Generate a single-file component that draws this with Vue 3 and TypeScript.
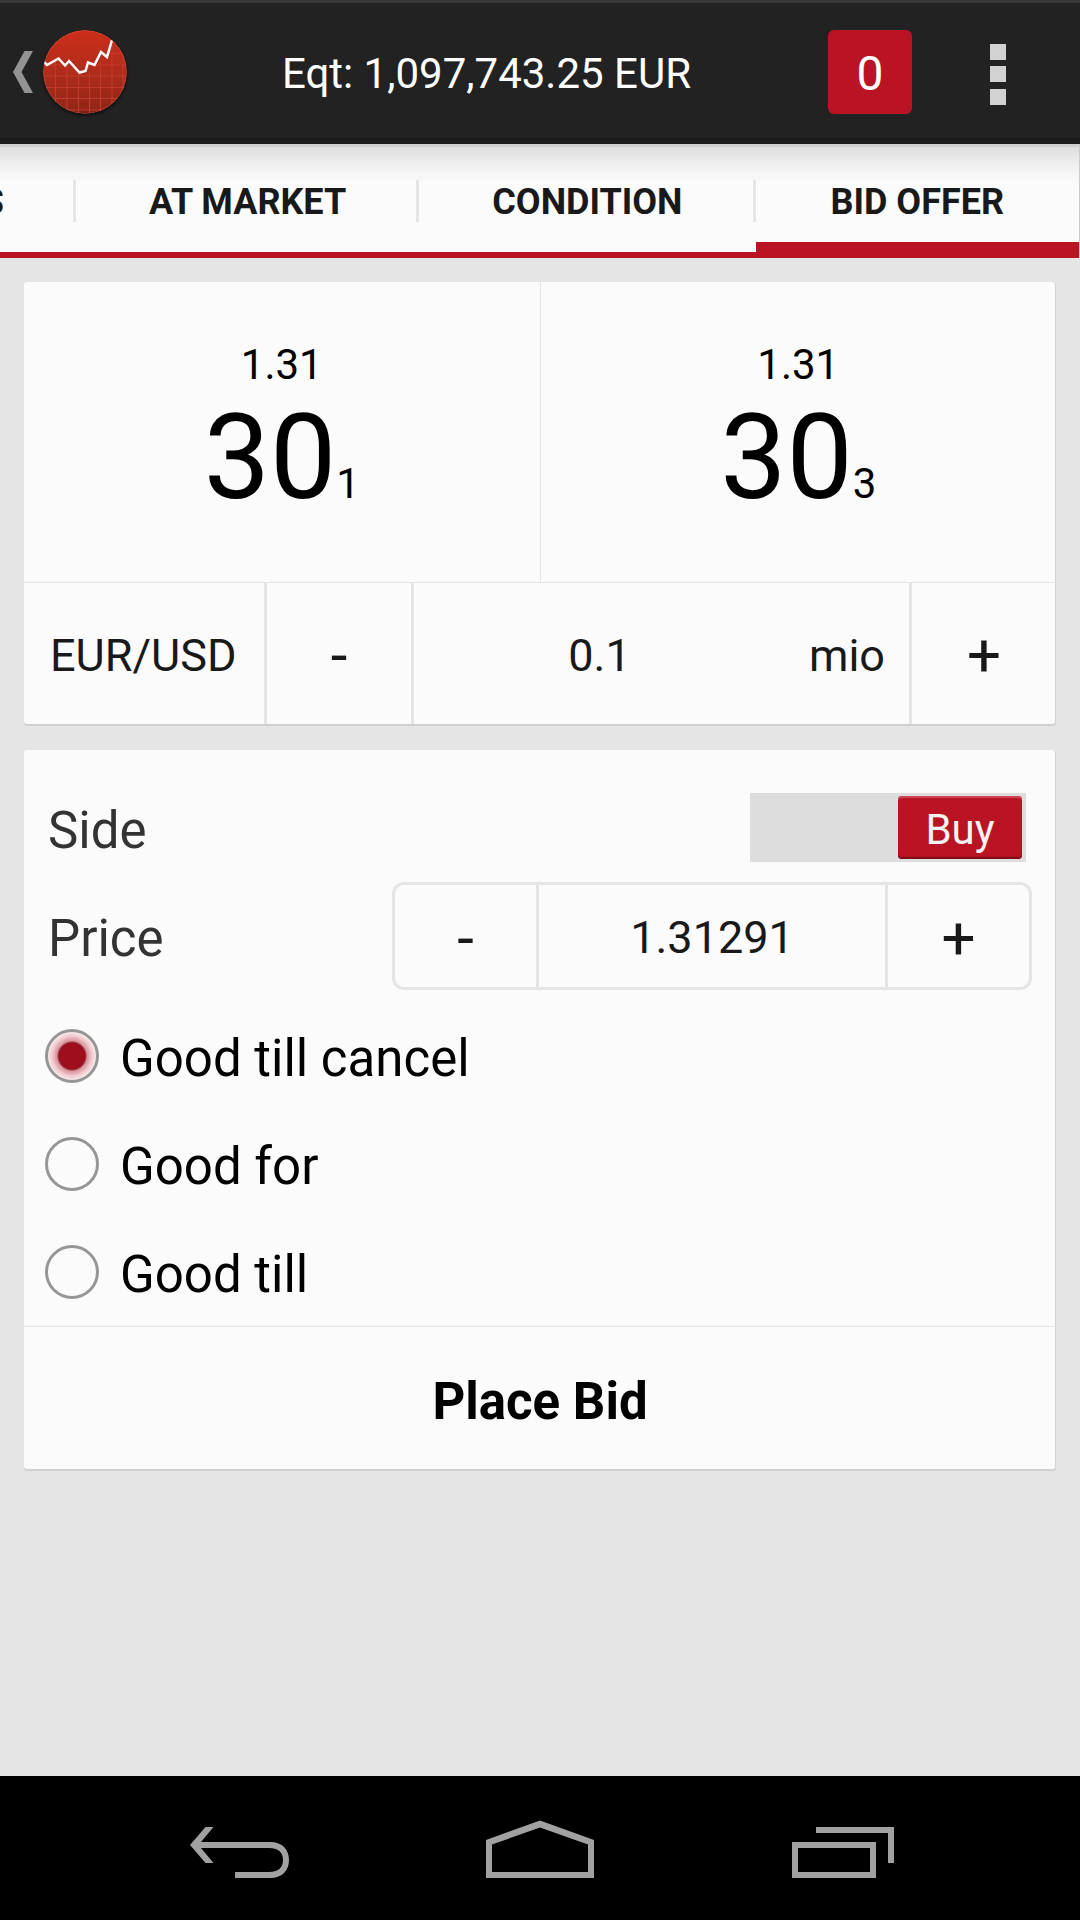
<script setup lang="ts">
import { ref } from 'vue'

interface Quote {
  name: string
  big: string
  pips: string
  point: string
}

const quotes: Quote[] = [
  { name: 'bid', big: '1.31', pips: '30', point: '1' },
  { name: 'offer', big: '1.31', pips: '30', point: '3' },
]

const tabs: string[] = ['S', 'AT MARKET', 'CONDITION', 'BID OFFER']
const activeTab = ref<string>('BID OFFER')

const amount = ref<string>('0.1')
const price = ref<string>('1.31291')
const isBuy = ref<boolean>(true)

const durations: string[] = ['Good till cancel', 'Good for', 'Good till']
const duration = ref<string>('Good till cancel')

function step(value: string, delta: number, digits: number): string {
  return Math.max(0, Number(value) + delta).toFixed(digits)
}
</script>

<template>
  <div class="screen">
    <header class="bar">
      <button class="home" aria-label="Navigate up">
        <svg class="chevron" viewBox="0 0 20 42" aria-hidden="true">
          <path d="M11.500 0H20L8.500 21 20 42H11.500L0 21Z" fill="#939393" />
        </svg>
        <svg class="logo" viewBox="0 0 84 84" aria-hidden="true">
          <defs>
            <linearGradient id="disc" x1="0" y1="0" x2="0" y2="1">
              <stop offset="0" stop-color="#cc2e19" />
              <stop offset="0.5" stop-color="#b02c1b" />
              <stop offset="0.94" stop-color="#922616" />
              <stop offset="1" stop-color="#6c1a0e" />
            </linearGradient>
            <clipPath id="round"><circle cx="42" cy="42" r="42" /></clipPath>
          </defs>
          <g clip-path="url(#round)">
            <rect width="84" height="84" fill="url(#disc)" />
            <path
              d="M12.500 30V84M24 34V84M35.500 42V84M46.500 42V84M57.500 32V84M69 12V84M80 24V84M68 23.500H84M0 35H20M50 35H84M0 46H84M0 57.500H84M0 68.500H84M0 80H84"
              fill="none"
              stroke="#c23a2e"
              stroke-width="1"
            />
            <path
              d="M0 31 4 35 15.500 28.500 22 35.500 26 31 36.500 42.500 42.500 41 45 32.500 51.500 35 58 22 64 27 69 10"
              fill="none"
              stroke="#fff"
              stroke-width="2.500"
            />
            <circle cx="42" cy="42" r="41.500" fill="none" stroke="#e06a55" stroke-opacity="0.4" />
          </g>
        </svg>
      </button>
      <h1 class="equity">Eqt: 1,097,743.25 EUR</h1>
      <button class="badge" aria-label="Open positions">0</button>
      <button class="more" aria-label="More options">
        <svg viewBox="0 0 16 61" aria-hidden="true">
          <path d="M0 0h16v16H0zM0 22h16v16H0zM0 45h16v16H0z" fill="#d2d2d2" />
        </svg>
      </button>
    </header>

    <nav class="tabs" role="tablist">
      <button
        v-for="tab in tabs"
        :key="tab"
        class="tab"
        :class="{ active: tab === activeTab }"
        role="tab"
        :aria-selected="tab === activeTab"
        @click="activeTab = tab"
      >
        {{ tab }}
      </button>
    </nav>

    <main class="content">
      <section class="card">
        <div class="quotes">
          <button v-for="q in quotes" :key="q.name" class="quote" :aria-label="q.name">
            <span class="figure">{{ q.big }}</span>
            <span class="pips">{{ q.pips }}<span class="figure">{{ q.point }}</span></span>
          </button>
        </div>
        <div class="amount">
          <label class="pair" for="amount">EUR/USD</label>
          <button class="sign" aria-label="Less" @click="amount = step(amount, -0.1, 1)">-</button>
          <div class="value">
            <input id="amount" v-model="amount" size="1" inputmode="decimal" />
            <span class="unit">mio</span>
          </div>
          <button class="sign" aria-label="More" @click="amount = step(amount, 0.1, 1)">+</button>
        </div>
      </section>

      <form class="card" @submit.prevent>
        <div class="order">
          <div class="field">
            <label class="name" for="side">Side</label>
            <span class="switch" :class="{ on: isBuy }">
              <input id="side" v-model="isBuy" type="checkbox" role="switch" />
              <span class="thumb">{{ isBuy ? 'Buy' : 'Sell' }}</span>
            </span>
          </div>
          <div class="field">
            <label class="name" for="price">Price</label>
            <div class="stepper">
              <button type="button" class="sign" aria-label="Lower" @click="price = step(price, -0.00001, 5)">-</button>
              <input id="price" v-model="price" size="1" inputmode="decimal" />
              <button type="button" class="sign" aria-label="Higher" @click="price = step(price, 0.00001, 5)">+</button>
            </div>
          </div>
          <div class="durations" role="radiogroup" aria-label="Duration">
            <label v-for="d in durations" :key="d" class="option">
              <input v-model="duration" type="radio" name="duration" :value="d" />
              <span>{{ d }}</span>
            </label>
          </div>
        </div>
        <button type="submit" class="place">Place Bid</button>
      </form>
    </main>

    <footer class="system">
      <button aria-label="Back">
        <svg viewBox="0 0 108 60" aria-hidden="true">
          <path
            d="M4 27 19.500 9H27.500L15 24H84C97 24 103 32 103 42S97 60 84 60H49V54H83C92 54 97 50 97 42S92 30 83 30H15L27.500 45H19.500Z"
            fill="#a1a1a1"
          />
        </svg>
      </button>
      <button aria-label="Home">
        <svg viewBox="0 0 108 60" aria-hidden="true">
          <path d="M0 22 54 2.500 108 22V60H0ZM6 26.500V54H102V26.500L54 9.500Z" fill="#a1a1a1" fill-rule="evenodd" />
        </svg>
      </button>
      <button aria-label="Recent apps">
        <svg viewBox="0 0 108 60" aria-hidden="true">
          <path d="M6 24H90V60H6ZM12 30V54H84V30ZM30 9H108V45H102V15H30Z" fill="#a1a1a1" fill-rule="evenodd" />
        </svg>
      </button>
    </footer>
  </div>
</template>

<style>
body {
  background: #e5e5e5;
}
</style>

<style scoped>
.screen {
  display: flex;
  flex-direction: column;
  min-height: 100vh;
  font-family: Roboto, "Liberation Sans", sans-serif;
  color: #191919;
}

.screen * {
  box-sizing: border-box;
}

button,
input {
  margin: 0;
  padding: 0;
  border: 0;
  border-radius: 0;
  background: none;
  color: inherit;
  font: inherit;
  min-width: 0;
}

svg {
  display: block;
}

.bar {
  display: flex;
  align-items: center;
  height: 144px;
  border-top: 3px solid #3a3a3a;
  border-bottom: 6px solid #1b1b1b;
  padding-top: 3px;
  background: #222;
  color: #fff;
}

.home {
  display: flex;
  align-items: center;
  gap: 10px;
  padding-left: 13px;
}

.chevron {
  width: 20px;
  height: 42px;
}

.logo {
  width: 84px;
  height: 84px;
  border-radius: 50%;
  box-shadow: 0 2px 3px #111;
}

.equity {
  flex: 1;
  margin: 0;
  padding: 4px 0 0 18px;
  font-size: 42px;
  font-weight: 400;
  line-height: 48px;
  text-align: center;
}

.badge {
  width: 84px;
  height: 84px;
  padding-top: 2px;
  border-radius: 6px;
  background: #ba1323;
  font-size: 48px;
}

.more {
  display: flex;
  justify-content: center;
  width: 168px;
  padding: 4px 0 0 4px;
}

.more svg {
  width: 16px;
  height: 61px;
}

.tabs {
  display: flex;
  justify-content: flex-end;
  height: 114px;
  overflow: hidden;
  border-right: 1px solid #ccc;
  background:
    linear-gradient(#ba1323, #ba1323) bottom / 100% 6px no-repeat,
    linear-gradient(#cfcfcf 3px, #dedede 3px, #efefef 20px, #fbfbfb 40px);
}

.tab {
  flex: none;
  padding: 2px 73px 0;
  background: linear-gradient(#e5e5e5, #e5e5e5) right 36px / 3px 42px no-repeat;
  font-size: 36px;
  font-weight: 700;
  white-space: nowrap;
}

.tab:first-child {
  padding-right: 72px;
}

.tab.active {
  padding: 18px 75px 0;
  border-bottom: 16px solid #ba1323;
  background: none;
}

.content {
  display: flex;
  flex: 1;
  flex-direction: column;
  gap: 26px;
  padding: 24px;
}

.card {
  border-radius: 3px;
  background: #fbfbfb;
  box-shadow: inset -1px 0 0 #d1d1d1, 0 2px 0 #d1d1d1;
}

.quotes {
  display: flex;
  border-bottom: 1px solid #e5e5e5;
  color: #000;
}

.quote {
  display: flex;
  flex: 1;
  flex-direction: column;
  align-items: center;
  justify-content: flex-start;
  gap: 9px;
  height: 300px;
  padding-top: 59px;
}

.quote + .quote {
  border-left: 1px solid #e5e5e5;
}

.figure {
  font-size: 42px;
  line-height: 48px;
}

.pips {
  font-size: 118px;
  line-height: 120px;
}

.amount {
  display: flex;
  height: 141px;
  font-size: 45px;
}

.pair {
  display: flex;
  align-items: center;
  width: 240px;
  padding: 4px 0 0 26px;
}

.sign {
  flex: none;
  width: 147px;
  padding-top: 4px;
  font-size: 60px;
}

.amount .sign {
  border-left: 3px solid #e5e5e5;
}

.value {
  display: flex;
  flex: 1;
  align-items: center;
  padding: 4px 24px 0 0;
  border-left: 3px solid #e5e5e5;
}

.value input,
.stepper input {
  flex: 1;
  text-align: center;
}

.unit {
  padding-left: 24px;
}

.order {
  padding: 24px 24px 0;
}

.field {
  display: flex;
  align-items: center;
  justify-content: space-between;
  height: 108px;
}

.name {
  padding-top: 4px;
  color: #333;
  font-size: 51px;
}

.switch {
  position: relative;
  display: flex;
  width: 276px;
  height: 69px;
  margin: 0 6px 2px 0;
  padding: 3px 4px;
  background: #ddd;
}

.switch input {
  position: absolute;
  inset: 0;
  width: 100%;
  height: 100%;
  opacity: 0;
}

.switch.on {
  justify-content: flex-end;
}

.thumb {
  width: 124px;
  border-radius: 4px;
  background: #ba1323;
  box-shadow: inset 0 2px 1px #d04a57, inset 0 -2px 1px #7d0c17;
  color: #f3f3f3;
  font-size: 42px;
  line-height: 68px;
  text-align: center;
}

.stepper {
  display: flex;
  width: 640px;
  height: 108px;
  border: 3px solid #e5e5e5;
  border-radius: 12px;
  font-size: 45px;
}

.stepper .sign {
  width: 141px;
}

.stepper input {
  padding-top: 2px;
  border: 3px solid #e5e5e5;
  border-width: 0 3px;
}

.durations {
  padding-top: 12px;
}

.option {
  display: flex;
  align-items: center;
  gap: 21px;
  height: 108px;
  color: #000;
  font-size: 51px;
}

.option input {
  flex: none;
  width: 54px;
  height: 54px;
  margin-left: -3px;
  border: 3px solid #969696;
  border-radius: 50%;
  appearance: none;
}

.option input:checked {
  background: radial-gradient(circle, #9f0e1d 13px, #8a4a50 14px, #dd8f97 15px, #f0cdd0 20px, #fbf0f1 25px);
}

.option span {
  padding-top: 4px;
}

.place {
  display: block;
  width: 100%;
  height: 143px;
  padding-top: 6px;
  border-top: 1px solid #e5e5e5;
  color: #000;
  font-size: 51px;
  font-weight: 700;
}

.system {
  display: flex;
  height: 144px;
  padding: 0 90px;
  background: #000;
}

.system button {
  display: flex;
  flex: 1;
  align-items: center;
  justify-content: center;
}

.system svg {
  width: 108px;
  height: 60px;
}
</style>
